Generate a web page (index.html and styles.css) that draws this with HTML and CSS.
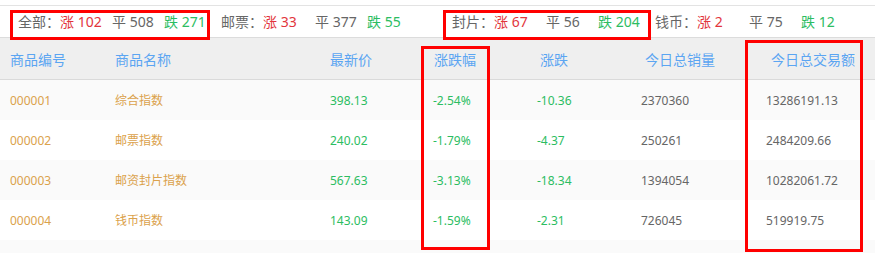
FILE: index.html
```html
<!DOCTYPE html>
<html lang="zh-CN">
<head>
<meta charset="utf-8">
<title>行情</title>
<link rel="stylesheet" href="styles.css">
</head>
<body>
<div class="page">
  <div class="summary">
    <div class="half">
      <div class="group">
        <span class="label">全部：</span>
        <span class="item up">涨 102</span>
        <span class="item flat">平 508</span>
        <span class="item down">跌 271</span>
      </div>
      <div class="group">
        <span class="label">邮票：</span>
        <span class="item up">涨 33</span>
        <span class="item flat">平 377</span>
        <span class="item down">跌 55</span>
      </div>
    </div>
    <div class="half">
      <div class="group">
        <span class="label">封片：</span>
        <span class="item up">涨 67</span>
        <span class="item flat">平 56</span>
        <span class="item down">跌 204</span>
      </div>
      <div class="group">
        <span class="label">钱币：</span>
        <span class="item up">涨 2</span>
        <span class="item flat">平 75</span>
        <span class="item down">跌 12</span>
      </div>
    </div>
  </div>

  <table class="quotes">
    <colgroup>
      <col class="c1"><col class="c2"><col class="c3"><col class="c4"><col class="c5"><col class="c6"><col class="c7">
    </colgroup>
    <thead>
      <tr>
        <th>商品编号</th>
        <th>商品名称</th>
        <th>最新价</th>
        <th class="h4">涨跌幅</th>
        <th class="h5">涨跌</th>
        <th class="h6">今日总销量</th>
        <th class="h7">今日总交易额</th>
      </tr>
    </thead>
    <tbody>
      <tr>
        <td class="code">000001</td><td class="name">综合指数</td><td class="down">398.13</td><td class="down">-2.54%</td><td class="down">-10.36</td><td class="num">2370360</td><td class="num">13286191.13</td>
      </tr>
      <tr>
        <td class="code">000002</td><td class="name">邮票指数</td><td class="down">240.02</td><td class="down">-1.79%</td><td class="down">-4.37</td><td class="num">250261</td><td class="num">2484209.66</td>
      </tr>
      <tr>
        <td class="code">000003</td><td class="name">邮资封片指数</td><td class="down">567.63</td><td class="down">-3.13%</td><td class="down">-18.34</td><td class="num">1394054</td><td class="num">10282061.72</td>
      </tr>
      <tr>
        <td class="code">000004</td><td class="name">钱币指数</td><td class="down">143.09</td><td class="down">-1.59%</td><td class="down">-2.31</td><td class="num">726045</td><td class="num">519919.75</td>
      </tr>
      <tr class="filler"><td colspan="7"></td></tr>
    </tbody>
  </table>

  <div class="mark mark-all"></div>
  <div class="mark mark-cover"></div>
  <div class="mark mark-pct"></div>
  <div class="mark mark-amount"></div>
</div>
</body>
</html>
```
FILE: styles.css
```css
html, body {
  margin: 0;
  padding: 0;
  background: #ffffff;
}
body {
  font-family: "Noto Sans", "Noto Sans CJK SC", sans-serif;
  color: #666666;
  overflow: hidden;
}
.page {
  position: relative;
  width: 875px;
  height: 254px;
}

/* summary bar */
.summary {
  margin-top: 5px;
  height: 31px;
  border-top: 1px solid #e3e3e3;
  border-bottom: 1px solid #dcdcdc;
  display: grid;
  grid-template-columns: 433px 1fr;
  padding-left: 10px;
  font-size: 14px;
  line-height: 31px;
}
.half {
  display: flex;
  gap: 5px;
  padding-left: 8px;
}
.half + .half {
  padding-left: 9px;
}
.group {
  display: flex;
  white-space: nowrap;
}
.label {
  width: 42px;
  color: #666666;
}
.item {
  width: 52px;
}
.up { color: #e2353c; }
.flat { color: #666666; }
.down { color: #2cbd62; }

/* table */
.quotes {
  width: 875px;
  border-collapse: collapse;
  table-layout: fixed;
}
.c1 { width: 105px; }
.c2 { width: 215px; }
.c3 { width: 103px; }
.c4 { width: 104px; }
.c5 { width: 104px; }
.c6 { width: 125px; }
.c7 { width: 119px; }

.quotes th {
  height: 41px;
  padding: 0 0 0 10px;
  text-align: left;
  font-weight: normal;
  font-size: 14px;
  color: #5ba5f2;
  background: #efefef;
  border-bottom: 1px solid #dadada;
}
.quotes th.h4 { padding-left: 11px; }
.quotes th.h5 { padding-left: 13px; }
.quotes th.h6 { padding-left: 14px; }
.quotes th.h7 { padding-left: 15px; }

.quotes td {
  height: 40px;
  padding: 0 0 0 10px;
  font-size: 12px;
  white-space: nowrap;
}
.quotes tbody tr:nth-child(odd) td {
  background: #fafafa;
}
.quotes tbody tr:nth-child(even) td {
  background: #ffffff;
}
.quotes td.code,
.quotes td.name {
  color: #dba24c;
}
.quotes td.num {
  color: #666666;
}
.quotes tr.filler td {
  height: 13px;
}

/* red annotation frames drawn over the content */
.mark {
  position: absolute;
  border: 3px solid #ff0000;
  box-sizing: border-box;
  pointer-events: none;
}
.mark-all {
  left: 10px;
  top: 5px;
  width: 200px;
  height: 30px;
}
.mark-cover {
  left: 443px;
  top: 5px;
  width: 208px;
  height: 30px;
}
.mark-pct {
  left: 421px;
  top: 41px;
  width: 69px;
  height: 204px;
}
.mark-amount {
  left: 745px;
  top: 35px;
  width: 118px;
  height: 212px;
}
```
